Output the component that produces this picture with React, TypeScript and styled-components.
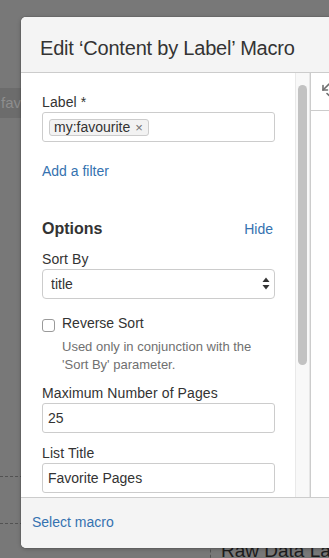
import React from "react";
import styled, { createGlobalStyle } from "styled-components";

const Global = createGlobalStyle`
  html, body { margin: 0; padding: 0; }
  body {
    background: #787878;
    font-family: "Liberation Sans", Arial, Helvetica, sans-serif;
    overflow: hidden;
  }
  * { box-sizing: border-box; }
`;

const Page = styled.div`
  position: relative;
  width: 329px;
  height: 558px;
  overflow: hidden;
  background: #787878;
  display: flex;
  flex-direction: column;
`;

const BackBand = styled.div`
  margin-top: 88px;
  height: 34px;
  background: #6c6c6c;
  color: #8e8e8e;
  font-size: 15px;
  line-height: 30px;
  padding-left: 1px;
  white-space: nowrap;
`;

const BackDash = styled.div<{ $gap: number }>`
  margin-top: ${(p) => p.$gap}px;
  height: 0;
  border-top: 1px dashed #525252;
`;

const BackBottom = styled.div`
  margin-top: 15px;
  display: flex;
  padding-left: 210px;
`;

const BackCell = styled.div`
  border-left: 1px dashed #525252;
  padding-left: 10px;
  font-size: 19px;
  line-height: 24px;
  color: #1c1c1c;
  white-space: nowrap;
`;

const Dialog = styled.div`
  position: absolute;
  top: 17px;
  left: 21px;
  width: 340px;
  height: 531px;
  background: #fff;
  border-radius: 5px;
  overflow: hidden;
  box-shadow: 0 0 0 1px rgba(0, 0, 0, 0.06), 0 1px 4px rgba(0, 0, 0, 0.25);
  display: flex;
  flex-direction: column;
`;

const Header = styled.header`
  height: 56px;
  flex: none;
  background: #f4f4f4;
  border-bottom: 1px solid #cccccc;
  padding: 19px 0 0 19px;
`;

const Title = styled.h2`
  margin: 0;
  font-size: 20px;
  line-height: 24px;
  font-weight: normal;
  letter-spacing: -0.2px;
  color: #333333;
  white-space: nowrap;
`;

const Body = styled.div`
  height: 425px;
  flex: none;
  display: flex;
  border-bottom: 1px solid #cccccc;
`;

const FormPanel = styled.div`
  width: 274px;
  flex: none;
  padding: 19px 20px 0 21px;
  display: flex;
  flex-direction: column;
  overflow: hidden;
`;

const FieldLabel = styled.label<{ $gap?: number }>`
  display: block;
  margin-top: ${(p) => p.$gap ?? 0}px;
  font-size: 14px;
  line-height: 20px;
  color: #333333;
  letter-spacing: 0.1px;
`;

const TextBox = styled.div`
  height: 30px;
  width: 100%;
  border: 1px solid #cccccc;
  border-radius: 3px;
  background: #fff;
  display: flex;
  align-items: center;
  padding: 0 6px;
`;

const TextInput = styled.input`
  height: 30px;
  width: 100%;
  border: 1px solid #cccccc;
  border-radius: 3px;
  background: #fff;
  padding: 0 5px;
  font-family: "Liberation Sans", Arial, sans-serif;
  font-size: 14px;
  color: #333333;
  outline: none;
`;

const Chip = styled.span`
  display: inline-flex;
  align-items: center;
  height: 17px;
  border: 1px solid #cccccc;
  border-radius: 3px;
  background: #f2f2f2;
  padding: 0 5px 0 4px;
  font-size: 14px;
  line-height: 15px;
  color: #333333;
`;

const ChipClose = styled.span`
  margin-left: 5px;
  font-size: 13px;
  color: #707070;
`;

const Link = styled.a<{ $gap?: number }>`
  display: block;
  margin-top: ${(p) => p.$gap ?? 0}px;
  font-size: 14px;
  line-height: 20px;
  color: #3572b0;
  text-decoration: none;
  cursor: pointer;
`;

const OptionsRow = styled.div`
  margin-top: 38px;
  display: flex;
  justify-content: space-between;
  align-items: baseline;
  line-height: 20px;
`;

const SectionTitle = styled.h3`
  margin: 0;
  font-size: 16px;
  font-weight: bold;
  line-height: 20px;
  color: #333333;
`;

const HideLink = styled.a`
  font-size: 14px;
  color: #3572b0;
  padding-right: 2px;
  cursor: pointer;
`;

const SelectWrap = styled.div`
  position: relative;
  height: 30px;
`;

const Select = styled.select`
  appearance: none;
  -webkit-appearance: none;
  width: 100%;
  height: 30px;
  border: 1px solid #cccccc;
  border-radius: 4px;
  background: #fff;
  padding: 0 20px 0 8px;
  font-family: "Liberation Sans", Arial, sans-serif;
  font-size: 14px;
  color: #333333;
  outline: none;
`;

const SelectArrows = styled.svg`
  position: absolute;
  right: 5px;
  top: 8px;
  pointer-events: none;
`;

const CheckRow = styled.div`
  margin-top: 14px;
  display: flex;
  align-items: flex-start;
  gap: 7px;
  font-size: 14px;
  line-height: 20px;
  color: #333333;
`;

const CheckBox = styled.span`
  width: 13px;
  height: 13px;
  margin-top: 6px;
  border: 1px solid #9a9a9a;
  border-radius: 3px;
  background: #fff;
  flex: none;
`;

const Description = styled.div`
  margin-top: 5px;
  padding-left: 20px;
  font-size: 13px;
  line-height: 18px;
  color: #707070;
`;

const ScrollTrack = styled.div`
  width: 15px;
  flex: none;
  background: #f8f8f8;
  border-left: 1px solid #e9e9e9;
  border-right: 1px solid #e6e6e6;
  padding: 12px 0 0 2px;
`;

const ScrollThumb = styled.div`
  width: 9px;
  height: 280px;
  border-radius: 5px;
  background: #c2c2c2;
`;

const SidePanel = styled.div`
  flex: 1;
  border-left: 1px solid #cccccc;
  display: flex;
  flex-direction: column;
`;

const SideToolbar = styled.div`
  height: 38px;
  border-bottom: 1px solid #cccccc;
  padding: 9px 0 0 10px;
`;

const Footer = styled.footer`
  flex: 1;
  background: #f4f4f4;
  padding: 14px 0 0 11px;
`;

export default function App() {
  return (
    <>
      <Global />
      <Page>
        <BackBand>fav</BackBand>
        <BackDash $gap={358} />
        <BackDash $gap={46} />
        <BackBottom>
          <BackCell>Raw Data La</BackCell>
        </BackBottom>

        <Dialog role="dialog">
          <Header>
            <Title>Edit ‘Content by Label’ Macro</Title>
          </Header>
          <Body>
            <FormPanel>
              <FieldLabel>Label *</FieldLabel>
              <TextBox>
                <Chip>
                  my:favourite<ChipClose>×</ChipClose>
                </Chip>
              </TextBox>
              <Link $gap={19}>Add a filter</Link>

              <OptionsRow>
                <SectionTitle>Options</SectionTitle>
                <HideLink>Hide</HideLink>
              </OptionsRow>

              <FieldLabel $gap={10}>Sort By</FieldLabel>
              <SelectWrap>
                <Select defaultValue="title">
                  <option value="title">title</option>
                </Select>
                <SelectArrows width="8" height="13" viewBox="0 0 8 13">
                  <path d="M4 0.5 L7.5 5 L0.5 5 Z" fill="#333" />
                  <path d="M4 12.5 L7.5 8 L0.5 8 Z" fill="#333" />
                </SelectArrows>
              </SelectWrap>

              <CheckRow>
                <CheckBox />
                <span>Reverse Sort</span>
              </CheckRow>
              <Description>
                Used only in conjunction with the
                <br />
                'Sort By' parameter.
              </Description>

              <FieldLabel $gap={9}>Maximum Number of Pages</FieldLabel>
              <TextInput readOnly value="25" />

              <FieldLabel $gap={10}>List Title</FieldLabel>
              <TextInput readOnly value="Favorite Pages" />
            </FormPanel>
            <ScrollTrack>
              <ScrollThumb />
            </ScrollTrack>
            <SidePanel>
              <SideToolbar>
                <svg width="16" height="18" viewBox="0 0 16 18">
                  <g stroke="#6f6f6f" strokeWidth="1.6" fill="none" strokeLinecap="round">
                    <path d="M8 2 L2 8" />
                    <path d="M2 3.5 L2 8 L6.5 8" />
                    <path d="M6 11.5 L8 13.5" />
                  </g>
                </svg>
              </SideToolbar>
            </SidePanel>
          </Body>
          <Footer>
            <Link>Select macro</Link>
          </Footer>
        </Dialog>
      </Page>
    </>
  );
}
